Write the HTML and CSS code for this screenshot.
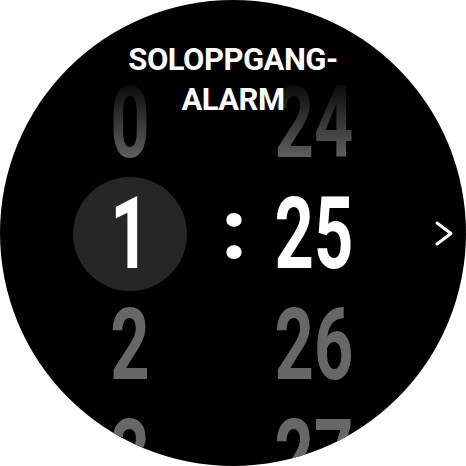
FILE: index.html
```html
<!DOCTYPE html>
<html lang="no">
<head>
<meta charset="utf-8">
<title>Soloppgangalarm</title>
<link rel="stylesheet" href="styles.css">
</head>
<body>
<div class="screen">
  <div class="picker">
    <div class="col hours">
      <div class="cell fade"><span class="num">0</span></div>
      <div class="cell sel"><span class="num">1</span></div>
      <div class="cell dim"><span class="num">2</span></div>
      <div class="cell dim"><span class="num">3</span></div>
    </div>
    <div class="col sep"><span class="colon">:</span></div>
    <div class="col mins">
      <div class="cell fade"><span class="num">24</span></div>
      <div class="cell cur"><span class="num">25</span></div>
      <div class="cell dim"><span class="num">26</span></div>
      <div class="cell dim"><span class="num">27</span></div>
    </div>
  </div>
  <h1 class="title">SOLOPPGANG-<br>ALARM</h1>
  <svg class="chev" viewBox="0 0 20 28" width="20" height="28" aria-hidden="true">
    <polyline points="3,4 17,14.5 3,25" fill="none" stroke="#fff" stroke-width="3" stroke-linecap="round" stroke-linejoin="round"/>
  </svg>
</div>
</body>
</html>
```
FILE: styles.css
```css
html, body {
  margin: 0;
  padding: 0;
  background: #fff;
}

.screen {
  position: relative;
  width: 466px;
  height: 466px;
  border-radius: 50%;
  overflow: hidden;
  background: #000;
  font-family: Roboto, "Liberation Sans", sans-serif;
}

.picker {
  display: flex;
  padding-left: 73px;
  padding-top: 67px;
}

.col {
  display: flex;
  flex-direction: column;
}

.hours { width: 114px; }
.sep { width: 94px; padding-top: 108px; align-items: center; }
.mins { width: 66px; }

.cell {
  height: 111px;
  display: flex;
  justify-content: center;
  font-size: 101px;
  font-weight: 700;
  line-height: 111px;
  color: #fff;
}

.num {
  display: inline-block;
  transform: scaleX(0.68);
}

.cell.sel {
  height: 114px;
  margin: -1.5px 0;
  line-height: 114px;
  border-radius: 50%;
  background: #262626;
}

.cell.dim { color: #676767; }

.cell.fade .num {
  color: transparent;
  background: linear-gradient(180deg, #000 8%, #6a6a6a 90%);
  -webkit-background-clip: text;
  background-clip: text;
}

.colon {
  display: block;
  height: 111px;
  font-size: 84px;
  font-weight: 900;
  line-height: 111px;
  color: #fff;
}

.title {
  position: absolute;
  top: 40px;
  left: 0;
  right: 0;
  margin: 0;
  text-align: center;
  font-size: 31px;
  font-weight: 700;
  letter-spacing: -0.5px;
  line-height: 40px;
  color: #fff;
}

.chev {
  position: absolute;
  left: 434px;
  top: 219px;
}
```
